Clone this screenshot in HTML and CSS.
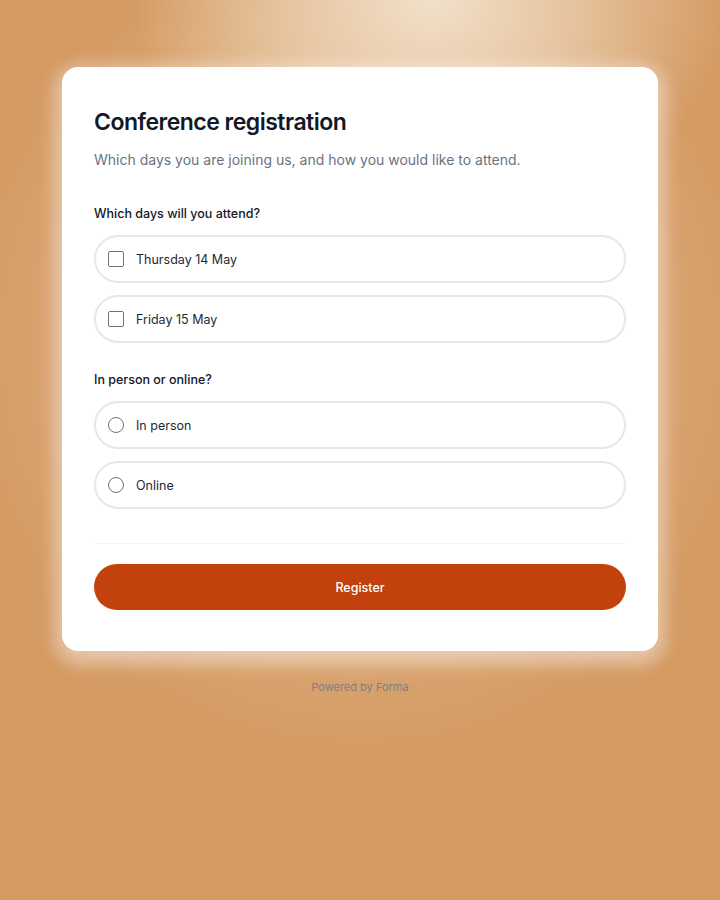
FILE: index.html
```html
<!DOCTYPE html>
<html>
<head>
  <meta charset="utf-8">
  <link rel="stylesheet" href="styles.css">
</head>
<body>
  <div class="page">
    <form class="card">
      <h1>Conference registration</h1>
      <p class="lead">Which days you are joining us, and how you would like to attend.</p>

      <div class="group">
        <div class="group-label">Which days will you attend?</div>
        <label class="option">
          <span class="box"></span>
          <span>Thursday 14 May</span>
        </label>
        <label class="option">
          <span class="box"></span>
          <span>Friday 15 May</span>
        </label>
      </div>

      <div class="group">
        <div class="group-label">In person or online?</div>
        <label class="option">
          <span class="dot"></span>
          <span>In person</span>
        </label>
        <label class="option">
          <span class="dot"></span>
          <span>Online</span>
        </label>
      </div>

      <div class="divider"></div>

      <button type="button" class="btn-register">Register</button>
    </form>

    <div class="footer">Powered by <span class="brand">Forma</span></div>
  </div>
</body>
</html>
```

FILE: styles.css
```css
html, body {
  margin: 0;
  height: 100%;
}
body {
  font-family: Inter, 'Noto Sans', sans-serif;
  background-color: #d49a62;
  background-image:
    radial-gradient(ellipse 300px 230px at 60% 0%, rgba(242, 224, 202, 1) 0%, rgba(240, 218, 192, 0.6) 50%, rgba(240, 218, 192, 0) 100%),
    radial-gradient(ellipse 400px 420px at 50% 38%, rgba(240, 212, 182, 0.7) 0%, rgba(236, 200, 164, 0.35) 60%, rgba(212, 154, 98, 0) 100%);
  color: #111827;
}
.page {
  width: 596px;
  margin: 0 auto;
  padding-top: 67px;
}
.card {
  background: #fff;
  border-radius: 16px;
  padding: 38px 32px 41px;
  box-shadow: 0 6px 18px 6px rgba(255, 255, 255, 0.5), 0 4px 10px rgba(120, 70, 30, 0.08);
}
.card h1 {
  margin: 0;
  font-size: 23px;
  line-height: 34px;
  font-weight: 600;
  letter-spacing: -0.5px;
  color: #111827;
}
.lead {
  margin: 10px 0 0 0;
  font-size: 14px;
  line-height: 22px;
  color: #6b7280;
}
.group {
  margin-top: 34px;
  display: flex;
  flex-direction: column;
  gap: 12px;
}
.group + .group {
  margin-top: 28px;
}
.group-label {
  font-size: 12.5px;
  font-weight: 500;
  line-height: 18px;
  color: #111827;
}
.option {
  display: flex;
  align-items: center;
  gap: 12px;
  height: 44px;
  padding: 0 12px;
  border: 2px solid #e5e7eb;
  border-radius: 999px;
  font-size: 12.5px;
  color: #1f2937;
}
.box, .dot {
  box-sizing: border-box;
  width: 16px;
  height: 16px;
  border: 1.5px solid #6b7280;
  flex: none;
}
.box {
  border-radius: 2px;
}
.dot {
  border-radius: 50%;
}
.divider {
  height: 1px;
  background: #f3f4f6;
  margin: 34px 0 20px;
}
.btn-register {
  display: block;
  width: 100%;
  height: 46px;
  border: none;
  border-radius: 999px;
  background: #c2410c;
  color: #fff;
  font-family: inherit;
  font-size: 12.5px;
  font-weight: 500;
  cursor: pointer;
}
.footer {
  margin-top: 29px;
  text-align: center;
  font-size: 11px;
  color: #7b7f86;
}
```
